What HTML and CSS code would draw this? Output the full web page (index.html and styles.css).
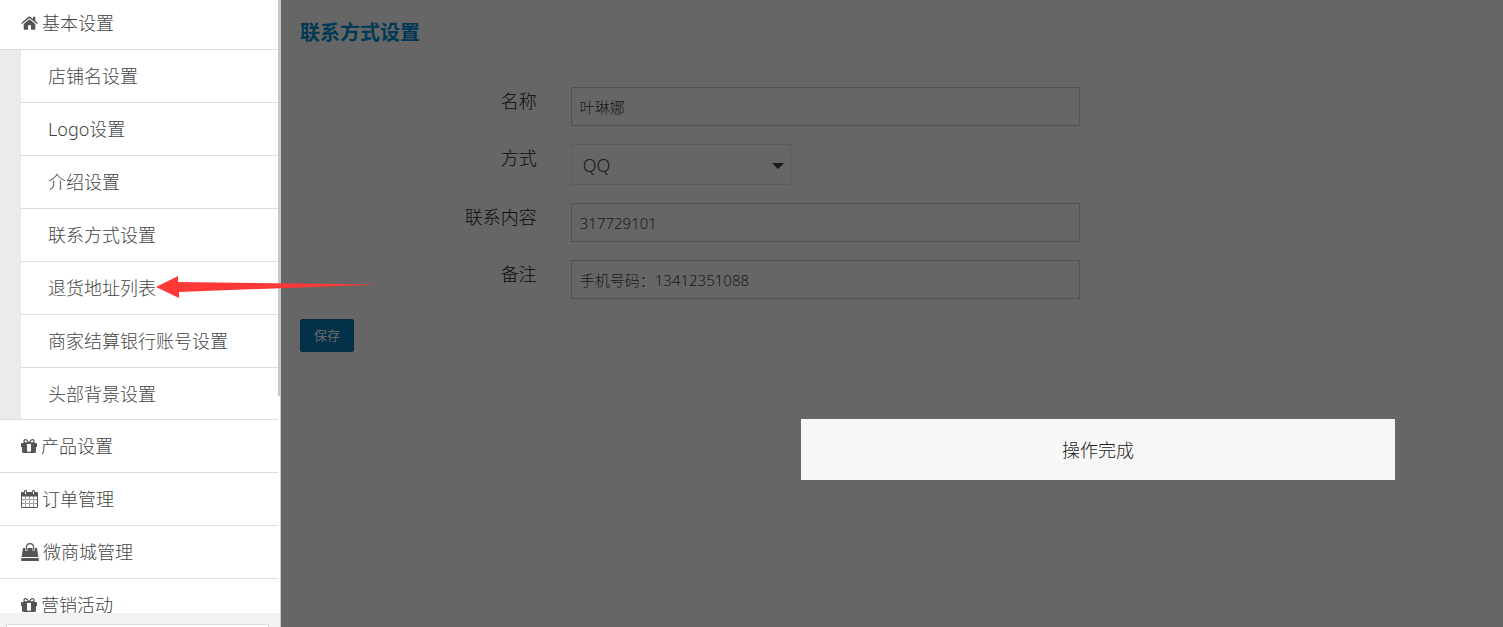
FILE: index.html
```html
<!DOCTYPE html>
<html lang="zh-CN">
<head>
<meta charset="utf-8">
<title>联系方式设置</title>
<link rel="stylesheet" href="styles.css">
</head>
<body>
<svg class="defs" aria-hidden="true">
  <symbol id="gift" viewBox="0 0 16 16">
    <path fill-rule="evenodd" d="M0.7 5H15.3Q16 5 16 5.7V9H15V13.6Q15 15 13.6 15H2.4Q1 15 1 13.6V9H0V5.7Q0 5 .7 5ZM6 6V13.6H10V6Z"/>
    <path d="M7 6H9V13.6H7Z" fill="#fff"/>
    <path fill="none" stroke="currentColor" stroke-width="1.3" d="M7.6 5H4.6Q2.8 4.8 2.9 3.2Q3.2 1.5 4.9 1.7Q6 1.9 8 5Q10 1.9 11.1 1.7Q12.8 1.5 13.1 3.2Q13.2 4.8 11.4 5H8.4"/>
  </symbol>
</svg>
<div class="app">
  <aside class="sidebar">
    <div class="menu-scroll">
      <nav class="menu">
        <a class="item" href="#"><svg class="icon" width="17" height="16" viewBox="0 0 17 16"><path d="M8.5 4.2L14.3 9V14.1Q14.3 14.7 13.7 14.7H10V10.3H7V14.7H3.3Q2.7 14.7 2.7 14.1V9Z"/><path d="M.2 8L7.6 1.8Q8.5 1.2 9.4 1.8L12 4V1.8H14.3V5.9L16.8 8L16 9L8.5 2.9L1 9Z"/></svg>基本设置</a>
        <div class="submenu">
          <a class="subitem" href="#">店铺名设置</a>
          <a class="subitem" href="#">Logo设置</a>
          <a class="subitem" href="#">介绍设置</a>
          <a class="subitem" href="#">联系方式设置</a>
          <a class="subitem" href="#">退货地址列表</a>
          <a class="subitem" href="#">商家结算银行账号设置</a>
          <a class="subitem" href="#">头部背景设置</a>
        </div>
        <a class="item" href="#"><svg class="icon" width="16" height="16"><use href="#gift"/></svg>产品设置</a>
        <a class="item" href="#"><svg class="icon" width="17" height="18" viewBox="0 0 17 18"><path fill-rule="evenodd" d="M1.2 2H3V1.4Q3 0 4.5 0T6 1.4V2H11V1.4Q11 0 12.5 0T14 1.4V2H15.8Q17 2 17 3.2V16.8Q17 18 15.8 18H1.2Q0 18 0 16.8V3.2Q0 2 1.2 2ZM1 6.5V9H4V6.5ZM5 6.5V9H8V6.5ZM9 6.5V9H12V6.5ZM13 6.5V9H16V6.5ZM1 10V13H4V10ZM5 10V13H8V10ZM9 10V13H12V10ZM13 10V13H16V10ZM1 14V17H4V14ZM5 14V17H8V14ZM9 14V17H12V14ZM13 14V17H16V14ZM4 1.2V4.2H5V1.2ZM12 1.2V4.2H13V1.2Z"/><path fill="none" stroke="#fff" stroke-opacity=".4" d="M4.5 6.5V17M8.5 6.5V17M12.5 6.5V17M1 9.5H16M1 13.5H16"/></svg>订单管理</a>
        <a class="item" href="#"><svg class="icon" width="18" height="18" viewBox="0 0 18 18"><path d="M2 5H16L17.4 14H.6ZM.4 15H17.6L18 17.2Q18 18 17.2 18H.8Q0 18 0 17.2Z"/><path fill="none" stroke="currentColor" stroke-width="1.2" d="M5.4 7V4.2Q5.6 .7 9 .7T12.6 4.2V7"/><path fill="none" stroke="#fff" stroke-width=".6" d="M4.5 5V7.5H6.3V5M11.7 5V7.5H13.5V5"/></svg>微商城管理</a>
        <a class="item" href="#"><svg class="icon" width="16" height="16"><use href="#gift"/></svg>营销活动</a>
      </nav>
      <div class="track"><div class="thumb"></div></div>
    </div>
    <div class="dock"><div class="dock-box"></div></div>
  </aside>
  <main class="main">
    <h1 class="title">联系方式设置</h1>
    <form class="form">
      <label class="label" for="name">名称</label>
      <input class="field" id="name" type="text" value="叶琳娜">
      <label class="label" for="kind">方式</label>
      <div class="select-wrap">
        <select class="select" id="kind"><option>QQ</option></select>
        <svg class="caret" width="12" height="6" viewBox="0 0 12 6"><path d="M0 0H12L6.6 5.6Q6 6 5.4 5.6Z"/></svg>
      </div>
      <label class="label" for="content">联系内容</label>
      <input class="field" id="content" type="text" value="317729101">
      <label class="label" for="note">备注</label>
      <input class="field" id="note" type="text" value="手机号码：13412351088">
    </form>
    <button class="save" type="button">保存</button>
    <div class="overlay"></div>
  </main>
</div>
<div class="toast" role="status">操作完成</div>
<svg class="arrow" width="222" height="24" viewBox="0 0 222 24"><path d="M0 11L22 0V6L222 8.5L23 16V22Z"/></svg>
</body>
</html>
```
FILE: styles.css
```css
* { box-sizing: border-box; }

body {
  margin: 0;
  font-family: "Noto Sans", "Noto Sans CJK SC", sans-serif;
  font-size: 18px;
  font-weight: 300;
  color: #222;
  background: #fff;
}

.defs { display: none; }

.app {
  display: flex;
  height: 100vh;
  overflow: hidden;
}

.sidebar {
  display: flex;
  flex: none;
  flex-direction: column;
  width: 281px;
  background: #fff;
}

.menu-scroll {
  display: flex;
  flex: 1;
  min-height: 0;
  overflow: hidden;
}

.menu {
  flex: 1;
  margin-top: -3px;
}

.item,
.subitem {
  display: flex;
  align-items: center;
  height: 53px;
  border-bottom: 1px solid #ddd;
  background: #fff;
  color: #444;
  line-height: 24px;
  text-decoration: none;
}

.item {
  gap: 4px;
  padding-left: 21px;
}

.subitem { padding-left: 27px; }

.submenu {
  padding-left: 21px;
  border-bottom: 1px solid #ddd;
  background: #ebebeb;
}

.submenu .subitem:last-child {
  height: 51px;
  border-bottom: 0;
}

.icon {
  flex: none;
  color: #555;
  fill: currentColor;
}

.track {
  width: 3px;
  border-right: 1px solid #c8c8c8;
}

.thumb {
  width: 3px;
  height: 396px;
  background: #c8c8c8;
}

.dock {
  height: 14px;
  padding: 11px 11px 0 6px;
  border-right: 1px solid #c8c8c8;
  background: #f2f2f2;
}

.dock-box {
  height: 3px;
  border: 1px solid #ddd;
  border-bottom: 0;
  background: #fff;
}

.main {
  position: relative;
  flex: 1;
  padding: 18px 19px;
}

.overlay {
  position: absolute;
  inset: 0;
  background: rgba(0, 0, 0, 0.6);
}

.title {
  margin: 0 0 39px;
  color: #0090d5;
  font-size: 20px;
  font-weight: 700;
  line-height: 30px;
}

.form {
  display: grid;
  grid-template-columns: 20% 43%;
  gap: 18px 34px;
  margin-bottom: 20px;
}

.label {
  line-height: 29px;
  text-align: right;
}

.field {
  width: 100%;
  height: 39px;
  padding: 0 8px;
  border: 1px solid #ccc;
  background: #fff;
  color: #444;
  font: inherit;
  font-size: 15px;
}

.select-wrap {
  position: relative;
  width: 220px;
}

.select {
  display: block;
  width: 100%;
  height: 41px;
  padding: 0 11px;
  appearance: none;
  border: 1px solid #e5e5e5;
  border-radius: 0;
  background: #fff;
  color: #444;
  font: inherit;
}

.caret {
  position: absolute;
  top: 19px;
  right: 7px;
  fill: #444;
  pointer-events: none;
}

.save {
  display: block;
  padding: 6px 13px;
  border: 1px solid #0d66b0;
  border-radius: 2px;
  background: #0a7cb8;
  color: #fff;
  font: inherit;
  font-size: 13px;
  font-weight: 400;
  line-height: 19px;
}

.toast {
  position: absolute;
  top: 419px;
  left: 53.3%;
  width: 39.5%;
  padding: 17px 16px 15px;
  background: #f7f7f7;
  line-height: 29px;
  text-align: center;
}

.arrow {
  position: absolute;
  top: 276px;
  left: 156px;
  fill: #ff3838;
}
```
